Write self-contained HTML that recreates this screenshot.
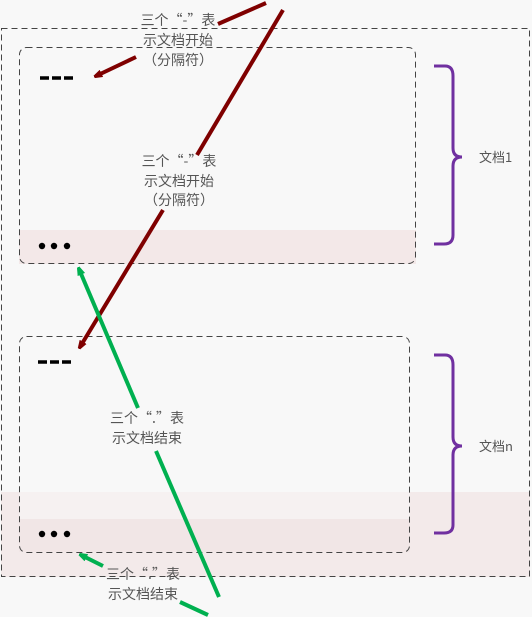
<!DOCTYPE html>
<html><head><meta charset="utf-8"><style>
html,body{margin:0;padding:0;background:#f8f8f8;}
svg{display:block}
text{font-family:"Noto Sans CJK SC","WenQuanYi Zen Hei",sans-serif;font-size:14px;fill:#555;}
</style></head><body>
<svg width="532" height="617" viewBox="0 0 532 617" xmlns="http://www.w3.org/2000/svg">
<defs>
<marker id="ar" markerWidth="8" markerHeight="8" refX="6" refY="4" orient="auto" markerUnits="userSpaceOnUse"><path d="M0,0 L12,4 L0,8 Z" fill="#7f0000"/></marker>
<marker id="ag" markerWidth="8" markerHeight="8" refX="6" refY="4" orient="auto" markerUnits="userSpaceOnUse"><path d="M0,0 L12,4 L0,8 Z" fill="#00b050"/></marker>
</defs>
<rect x="0" y="0" width="532" height="617" fill="#f8f8f8"/>
<rect x="1" y="492" width="529" height="85" fill="#f3eaea"/>
<rect x="19" y="230" width="397" height="34" fill="#f3e8e8"/>
<rect x="19" y="519" width="391" height="33" fill="#f1e6e6"/>
<rect x="19" y="492" width="391" height="27" fill="#f6f1f1"/>
<rect x="1.5" y="28.5" width="528" height="548" fill="none" stroke="#444" stroke-dasharray="6,4"/>
<rect x="19.5" y="47.5" width="396" height="216" rx="7" fill="none" stroke="#444" stroke-dasharray="6,4"/>
<rect x="19.5" y="336.5" width="390" height="216" rx="7" fill="none" stroke="#444" stroke-dasharray="6,4"/>
<g stroke="#000" stroke-width="3.5">
<line x1="40" y1="78" x2="49" y2="78"/><line x1="52" y1="78" x2="61" y2="78"/><line x1="64" y1="78" x2="73" y2="78"/>
<line x1="38" y1="362" x2="47" y2="362"/><line x1="50" y1="362" x2="59" y2="362"/><line x1="62" y1="362" x2="71" y2="362"/>
</g>
<g fill="#000">
<circle cx="42" cy="246" r="3.2"/><circle cx="54" cy="246" r="3.2"/><circle cx="67" cy="246" r="3.2"/>
<circle cx="42" cy="534" r="3.2"/><circle cx="54" cy="534" r="3.2"/><circle cx="67" cy="534" r="3.2"/>
</g>
<g fill="none" stroke="#7030a0" stroke-width="3">
<path d="M434,66 L445,66 Q453,66 453,76 L453,148 Q453,157 462,157 Q453,157 453,166 L453,235 Q453,244 444,244 L434,244"/>
<path d="M434,355 L445,355 Q453,355 453,365 L453,437 Q453,446 462,446 Q453,446 453,455 L453,525 Q453,533 444,533 L434,533"/>
</g>
<text x="479" y="162" style="font-size:13px">文档1</text>
<text x="479" y="451" style="font-size:13px">文档n</text>
<g stroke="#7f0000" stroke-width="4" fill="none">
<line x1="266" y1="3" x2="218" y2="24"/>
<line x1="136" y1="57" x2="96" y2="76" marker-end="url(#ar)"/>
<line x1="283" y1="10" x2="197" y2="155"/>
<line x1="163" y1="210" x2="80" y2="347" marker-end="url(#ar)"/>
</g>
<g stroke="#00b050" stroke-width="4" fill="none">
<line x1="138" y1="408" x2="79" y2="269" marker-end="url(#ag)"/>
<line x1="156" y1="451" x2="219" y2="597"/>
<line x1="180" y1="602" x2="208" y2="615"/>
<line x1="103" y1="566" x2="81" y2="555" marker-end="url(#ag)"/>
</g>
<g text-anchor="middle">
<text x="178" y="25">三个“-”表</text>
<text x="178" y="45">示文档开始</text>
<text x="178" y="65">（分隔符）</text>
<text x="179" y="166">三个“-”表</text>
<text x="179" y="186">示文档开始</text>
<text x="179" y="205">（分隔符）</text>
<text x="147" y="423">三个“.”表</text>
<text x="147" y="443">示文档结束</text>
<text x="143" y="579">三个“.”表</text>
<text x="143" y="599">示文档结束</text>
</g>
</svg>
</body></html>
